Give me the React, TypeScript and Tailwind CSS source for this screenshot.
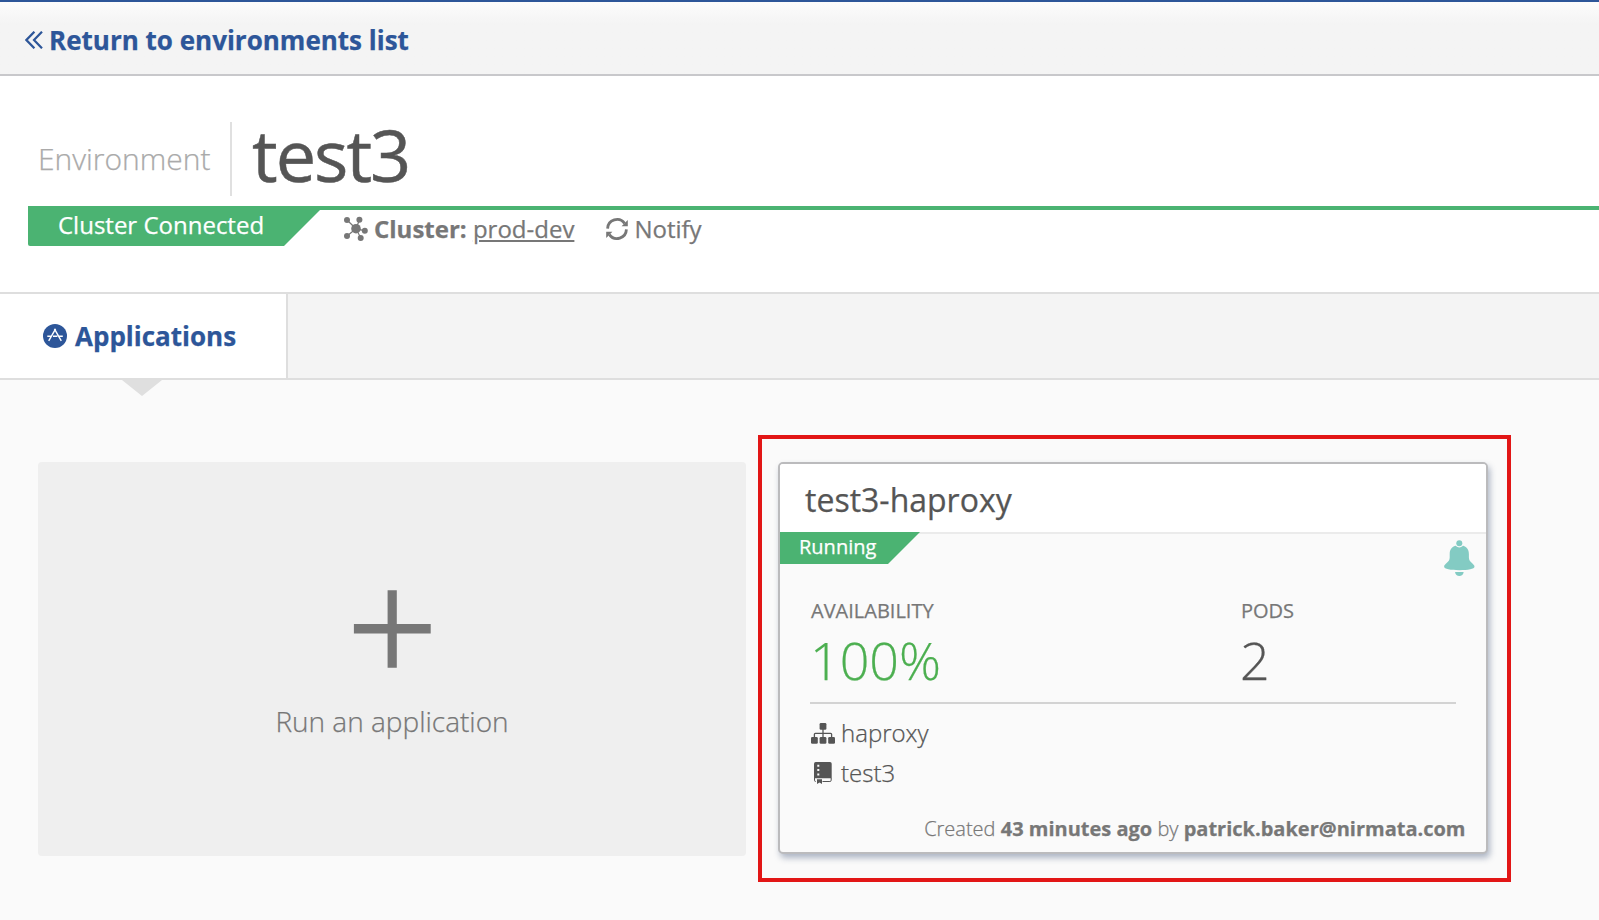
function DoubleChevronLeft() {
  return (
    <svg className="h-[18px] w-[18px]" viewBox="0 0 18 18" fill="none" stroke="currentColor" strokeWidth="2.2">
      <path d="M9.4 .7 1.4 9l8 8.3M17 .7 9 9l8 8.3" />
    </svg>
  );
}

function HubIcon() {
  return (
    <svg className="h-[26px] w-[26px]" viewBox="0 0 26 26" fill="currentColor">
      <path d="M13 12.7 4 4M13 12.7 16.4 4M13 12.7l9 2.1M13 12.7 17.8 22M13 12.7 4 20" stroke="currentColor" strokeWidth="1.2" />
      <circle cx="13" cy="12.7" r="4.8" />
      <circle cx="4" cy="4" r="3" />
      <circle cx="16.4" cy="3.8" r="3" />
      <circle cx="21.8" cy="14.8" r="3" />
      <circle cx="17.7" cy="22" r="3" />
      <circle cx="4" cy="20" r="3" />
    </svg>
  );
}

function RefreshIcon() {
  return (
    <svg className="h-[22px] w-[22px]" viewBox="0 0 22 22" fill="none" stroke="currentColor" strokeWidth="2.8">
      <path d="M1.6 10.6A9.4 9.4 0 0 1 18.6 5.4" />
      <path d="M20.4 11.4A9.4 9.4 0 0 1 3.4 16.6" />
      <path d="M21.8 2v6.2h-6.2z M.2 20v-6.2h6.2z" fill="currentColor" stroke="none" />
    </svg>
  );
}

function AppsIcon() {
  return (
    <svg className="h-6 w-6" viewBox="0 0 24 24">
      <circle cx="12" cy="12" r="12" fill="#2d5699" />
      <path d="M11.4 4.8l6.9 12M12.6 4.8l-6.9 12M4.3 12.3h4M10 12.3h4.4M15.8 12.3h4" stroke="#fff" strokeWidth="1.4" fill="none" />
    </svg>
  );
}

function BellIcon() {
  return (
    <svg className="h-[38px] w-8" viewBox="0 0 32 38" fill="#83cbc3">
      <path d="M16.3 6.2c6 0 9.6 2.9 9.6 8.8v3.5c0 5 5.6 6.3 5.6 9.1 0 2.6-6.5 3.6-15.2 3.6S1.1 30.2 1.1 27.6c0-2.8 5.6-4.1 5.6-9.1V15c0-5.9 3.6-8.8 9.6-8.8z" />
      <circle cx="16.3" cy="4.3" r="4.1" fill="#fafafa" />
      <circle cx="16.3" cy="4.3" r="3" />
      <path d="M12 32.9h8.7c-.4 2.5-2 4-4.35 4S12.4 35.400 12 32.900z" />
    </svg>
  );
}

function SitemapIcon() {
  return (
    <svg className="h-[21px] w-6" viewBox="0 0 24 21" fill="#555">
      <rect x="8.6" y="0" width="6.8" height="6.8" rx="1.3" />
      <rect x="0" y="14" width="6.8" height="6.8" rx="1.3" />
      <rect x="8.6" y="14" width="6.8" height="6.8" rx="1.3" />
      <rect x="17.2" y="14" width="6.8" height="6.8" rx="1.3" />
      <path d="M12 6v9M3.4 14.5v-3.3q0-.9.9-.9h15.4q.9 0 .9.9v3.3" fill="none" stroke="#555" strokeWidth="1.3" />
    </svg>
  );
}

function NotebookIcon() {
  return (
    <svg className="h-[22px] w-[18px]" viewBox="0 0 18 22" fill="#555">
      <path d="M1.7 0h14.3a1.7 1.7 0 0 1 1.7 1.7V16.3H0V1.7A1.7 1.7 0 0 1 1.7 0z" />
      <path d="M.5 16v2.2q0 1.3 1.2 1.3M8.5 19.5h7.4q1.3 0 1.3-1.3V16" fill="none" stroke="#555" />
      <path d="M3 17.3h5V22l-2.5-1.6L3 22z" />
      <path d="M3.3 2.8h2v2h-2zM3.3 7h2v2h-2zM3.3 11.4h2v2h-2z" fill="#fafafa" />
    </svg>
  );
}

function TopBar() {
  return (
    <nav className="flex h-19 items-center border-t-2 border-b-2 border-t-[#2d5699] border-b-[#c8c8cb] bg-gradient-to-b from-[#fcfcfc] to-[#f4f4f4] to-30% pt-1 pl-[25px] text-[26px] font-bold text-[#2d5699]">
      <a className="flex items-center gap-1.5">
        <DoubleChevronLeft />
        <span>Return to environments list</span>
      </a>
    </nav>
  );
}

function EnvironmentHeader() {
  return (
    <header className="h-[216px] bg-white pt-[46px]">
      <div className="flex h-[74px] items-center pl-[38px]">
        <span className="w-48 pb-0.5 text-[30px] font-light text-[#aaa]">Environment</span>
        <div className="flex h-full items-center border-l-2 border-[#e0e0e0] pb-2.5 pl-5">
          <h1 className="text-[72px] leading-none tracking-[-2px] text-[#555] [-webkit-text-stroke:0.5px]">test3</h1>
        </div>
      </div>
      <div className="mt-2.5 ml-7 flex h-10 text-2xl text-[#777]">
        <div className="flex w-[296px] items-center rounded-bl-xs bg-[#4bb372] pb-[3px] pl-[30px] text-white [clip-path:polygon(0_0,100%_0,100%_0,256px_100%,0_100%)]">
          Cluster Connected
        </div>
        <div className="-ml-1 flex flex-1 items-center border-t-4 border-[#4bb372] pt-0.5 pl-[23px]">
          <HubIcon />
          <span className="ml-[5px] whitespace-pre">
            <b>Cluster:</b>{" "}
            <a className="underline decoration-2 underline-offset-2">prod-dev</a>
          </span>
          <span className="ml-8 flex items-center gap-1.5">
            <RefreshIcon />
            Notify
          </span>
        </div>
      </div>
    </header>
  );
}

function Tabs() {
  return (
    <div className="flex h-22 border-y-2 border-[#dedede] bg-[#f4f4f4]">
      <div className="relative flex w-72 items-center gap-2 border-r-2 border-[#dedede] bg-white pl-[43px] text-[26px] font-bold text-[#2d5699]">
        <AppsIcon />
        Applications
        <svg className="absolute top-[86px] left-[122px] h-4 w-10" viewBox="0 0 40 16" fill="#dfdfdf">
          <path d="M0 0h40L20 16z" />
        </svg>
      </div>
    </div>
  );
}

function RunCard() {
  return (
    <button className="flex h-[394px] w-[708px] flex-col items-center rounded-sm bg-[#efefef] pt-32 text-[28px] font-light text-[#777]">
      <svg className="h-[78px] w-[78px]" viewBox="0 0 78 78" fill="#777">
        <path d="M34.6 .3h9.2V34h33.9v9.5H43.8v34.2h-9.2V43.5H.9V34h33.7z" />
      </svg>
      <span className="mt-8 leading-[42px]">Run an application</span>
    </button>
  );
}

function AppCard() {
  return (
    <div className="relative">
      <article className="flex h-[392px] w-[710px] flex-col rounded-[5px] border-2 border-[#bbbbbd] bg-[#fafafa] shadow-[2px_4px_6px_rgba(50,70,110,0.38)]">
        <h2 className="flex h-[70px] items-center rounded-t-[3px] border-b-2 border-[#ebebeb] bg-white pt-1 pl-[25px] text-[32px] text-[#555]">
          test3-haproxy
        </h2>
        <div className="relative -mt-0.5 flex justify-between">
          <div className="flex h-8 w-[140px] items-center bg-[#4bb372] pb-0.5 pl-[19px] text-xl text-white [clip-path:polygon(0_0,100%_0,108px_100%,0_100%)]">
            Running
          </div>
          <div className="mt-[7px] mr-[11px] h-[38px]">
            <BellIcon />
          </div>
        </div>
        <div className="mx-[30px] mt-5 flex h-[107px] border-b-2 border-[#d3d3d3]">
          <div className="w-[430px]">
            <div className="pl-px text-xl leading-7 text-[#777]">AVAILABILITY</div>
            <div className="mt-px text-[52px] leading-[68px] font-light text-[#4caf50]">100%</div>
          </div>
          <div>
            <div className="pl-px text-xl leading-7 text-[#777]">PODS</div>
            <div className="mt-px text-[52px] leading-[68px] font-light text-[#555]">2</div>
          </div>
        </div>
        <ul className="mt-[9px] ml-[31px] text-2xl leading-10 font-light text-[#555]">
          <li className="flex h-10 items-center">
            <span className="w-[30px]"><SitemapIcon /></span>
            haproxy
          </li>
          <li className="flex h-10 items-center">
            <span className="w-[30px] pl-[3px]"><NotebookIcon /></span>
            test3
          </li>
        </ul>
        <p className="mt-auto mb-[9px] pr-[20.5px] text-right text-xl leading-7 font-light text-[#777]">
          Created <b className="font-bold">43 minutes ago</b> by <b className="font-bold">patrick.baker@nirmata.com</b>
        </p>
      </article>
      <div className="pointer-events-none absolute -top-[27px] -right-[23px] -bottom-7 -left-5 border-4 border-[#e21616]" />
    </div>
  );
}

export default function App() {
  return (
    <div className="flex h-[920px] w-full flex-col overflow-hidden bg-[#fafafa] font-['Open_Sans',sans-serif] [-webkit-text-stroke:0.25px]">
      <TopBar />
      <EnvironmentHeader />
      <Tabs />
      <main className="flex items-start gap-8 pt-[82px] pl-[38px]">
        <RunCard />
        <AppCard />
      </main>
    </div>
  );
}
